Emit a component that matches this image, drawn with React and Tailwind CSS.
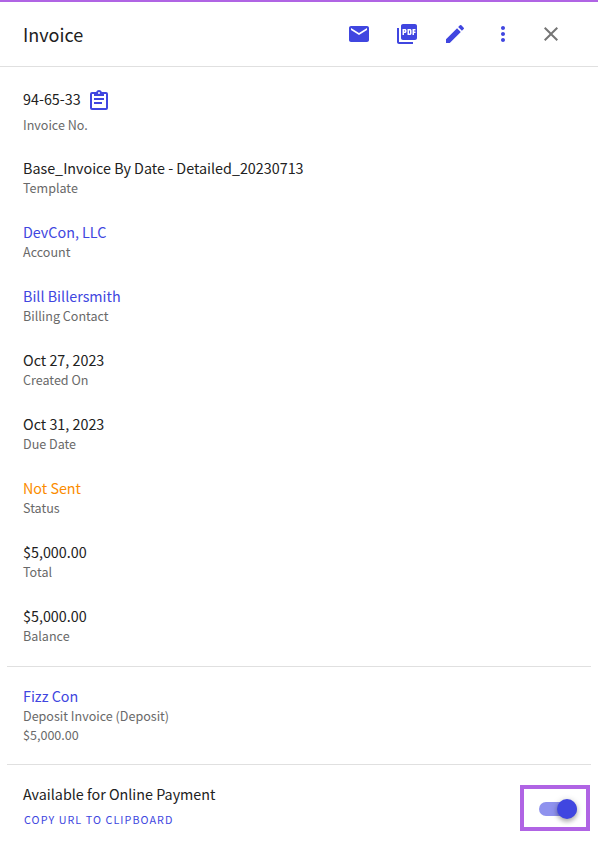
import { MdEmail, MdPictureAsPdf, MdEdit, MdMoreVert, MdClose } from "react-icons/md";

const fields = [
  { value: "Base_Invoice By Date - Detailed_20230713", label: "Template", color: "text-[#212121]" },
  { value: "DevCon, LLC", label: "Account", color: "text-[#4046e0]" },
  { value: "Bill Billersmith", label: "Billing Contact", color: "text-[#4046e0]" },
  { value: "Oct 27, 2023", label: "Created On", color: "text-[#212121]" },
  { value: "Oct 31, 2023", label: "Due Date", color: "text-[#212121]" },
  { value: "Not Sent", label: "Status", color: "text-[#fb8c00]" },
  { value: "$5,000.00", label: "Total", color: "text-[#212121]" },
  { value: "$5,000.00", label: "Balance", color: "text-[#212121]" },
];

function Value({ className = "", children }) {
  return <div className={`text-[14.33px] leading-5 ${className}`}>{children}</div>;
}

function Label({ children }) {
  return <div className="text-[12.55px] leading-[19px] text-[#696969]">{children}</div>;
}

function ClipboardIcon() {
  return (
    <svg viewBox="0 0 24 24" className="mt-0.5 size-6 shrink-0 fill-[#4046e0]">
      <path d="M19,3H14.82C14.4,1.84 13.3,1 12,1C10.7,1 9.6,1.84 9.18,3H5A2,2 0 0,0 3,5V19A2,2 0 0,0 5,21H19A2,2 0 0,0 21,19V5A2,2 0 0,0 19,3M12,3A1,1 0 0,1 13,4A1,1 0 0,1 12,5A1,1 0 0,1 11,4A1,1 0 0,1 12,3M7,7H17V5H19V19H5V5H7V7M17,11H7V9H17V11M15,15H7V13H15V15Z" />
    </svg>
  );
}

export default function App() {
  return (
    <div className="h-[844px] w-[598px] overflow-hidden border-t-2 border-[#b064e4] bg-white font-['Noto_Sans_CJK_SC',sans-serif]">
      <header className="flex h-[65px] items-center border-b border-[#e0e0e0] pl-[23px] pr-[35px]">
        <h1 className="flex-1 text-[18px] leading-6 text-[#212121]">Invoice</h1>
        <div className="flex gap-6 text-2xl text-[#4046e0]">
          <button aria-label="Email"><MdEmail /></button>
          <button aria-label="PDF"><MdPictureAsPdf /></button>
          <button aria-label="Edit"><MdEdit /></button>
          <button aria-label="More"><MdMoreVert /></button>
          <button aria-label="Close" className="text-[#757575]"><MdClose /></button>
        </div>
      </header>

      <section className="mx-[7px] h-[600px] border-b border-[#e0e0e0] px-4 pt-5">
        <div className="mb-6 h-[47px]">
          <div className="flex h-6 items-start">
            <Value className="w-16 pt-0.5 text-[#212121]">94-65-33</Value>
            <ClipboardIcon />
          </div>
          <div className="pt-1"><Label>Invoice No.</Label></div>
        </div>
        {fields.map((f) => (
          <div key={f.label} className="h-16">
            <Value className={f.color}>{f.value}</Value>
            <Label>{f.label}</Label>
          </div>
        ))}
      </section>

      <section className="mx-[7px] h-[98px] border-b border-[#e0e0e0] px-4 pt-[19px]">
        <Value className="text-[#4046e0]">Fizz Con</Value>
        <Label>Deposit Invoice (Deposit)</Label>
        <Label>$5,000.00</Label>
      </section>

      <section className="flex justify-between pl-[23px] pr-2 pt-[19px]">
        <div>
          <Value className="text-[#212121]">Available for Online Payment</Value>
          <button className="mt-2 block pl-px text-[10.75px] leading-4 tracking-[1.07px] text-[#4046e0]">COPY URL TO CLIPBOARD</button>
        </div>
        <div className="mt-px flex h-[46px] w-[70px] items-center border-4 border-[#b064e4] pl-[15px] pt-0.5">
          <div className="flex h-3.5 w-[38px] items-center justify-end rounded-full bg-[#8f92ee]">
            <div className="size-5 shrink-0 rounded-full bg-[#4046e0] shadow-[0_3px_4px_rgba(0,0,0,0.2),0_1px_6px_rgba(0,0,0,0.22)]" />
          </div>
        </div>
      </section>
    </div>
  );
}
